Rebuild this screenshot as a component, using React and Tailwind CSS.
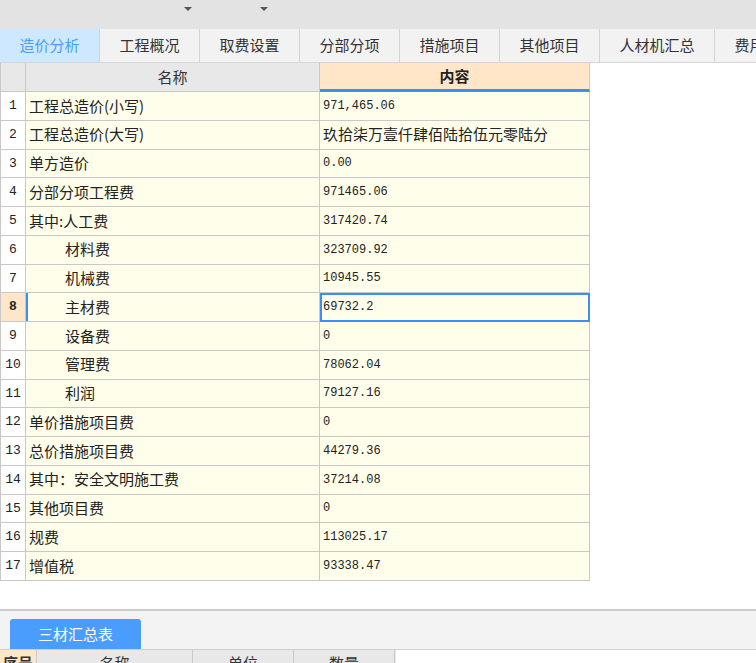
import clsx from 'clsx'

const TABS = ['造价分析', '工程概况', '取费设置', '分部分项', '措施项目', '其他项目', '人材机汇总', '费用汇总']

const ROWS = [
  ['工程总造价(小写)', '971,465.06', false],
  ['工程总造价(大写)', '玖拾柒万壹仟肆佰陆拾伍元零陆分', false],
  ['单方造价', '0.00', false],
  ['分部分项工程费', '971465.06', false],
  ['其中:人工费', '317420.74', false],
  ['材料费', '323709.92', true],
  ['机械费', '10945.55', true],
  ['主材费', '69732.2', true],
  ['设备费', '0', true],
  ['管理费', '78062.04', true],
  ['利润', '79127.16', true],
  ['单价措施项目费', '0', false],
  ['总价措施项目费', '44279.36', false],
  ['其中：安全文明施工费', '37214.08', false],
  ['其他项目费', '0', false],
  ['规费', '113025.17', false],
  ['增值税', '93338.47', false],
]

const cjk = "font-['Noto_Sans_CJK_SC',sans-serif]"
const mono = "font-['Liberation_Mono','Noto_Sans_CJK_SC',monospace]"

function Caret() {
  return <span className="block w-0 h-0 border-l-[4px] border-r-[4px] border-t-[4px] border-l-transparent border-r-transparent border-t-[#555]" />
}

export default function App() {
  const selected = 8
  return (
    <div className={clsx('w-[756px] h-[663px] overflow-hidden bg-white flex flex-col', cjk)}>
      {/* Toolbar */}
      <div className="h-[29px] bg-[#e3e3e3] flex items-start pt-[7px] shrink-0">
        <div className="ml-[184px]"><Caret /></div>
        <div className="ml-[68px]"><Caret /></div>
      </div>

      {/* Tabs */}
      <div className="h-[34px] bg-[#f2f2f2] flex shrink-0 border-b border-[#d6d6d6]">
        {TABS.map((t, i) => (
          <div
            key={t}
            className={clsx(
              'shrink-0 flex items-center justify-center text-[15px] border-r border-[#d3d3d3]',
              i === 6 ? 'w-[115px]' : 'w-[100px]',
              i === 0 ? 'bg-[#cde8ff] text-[#4a9df8]' : 'text-[#333]',
            )}
          >
            {t}
          </div>
        ))}
      </div>

      {/* Main table */}
      <div className="w-[590px] shrink-0 border-l border-[#c8c8c8]">
        <div className="grid grid-cols-[25px_294px_270px] h-[29px]">
          <div className="bg-[#e8e8e8] border-r border-b border-[#c8c8c8]" />
          <div className="bg-[#e8e8e8] border-r border-b border-[#c8c8c8] flex items-center justify-center text-[15px] text-[#333]">名称</div>
          <div className="bg-[#ffe6c9] border-r border-[#c8c8c8] border-b-[3px] border-b-[#3d8ef2] flex items-center justify-center text-[15px] font-bold text-[#222]">内容</div>
        </div>
        {ROWS.map(([name, value, indent], i) => {
          const n = i + 1
          const sel = n === selected
          return (
            <div key={n} className="grid grid-cols-[25px_294px_270px] h-[28.75px]">
              <div className={clsx(
                'border-r border-b border-[#c8c8c8] flex items-center justify-center text-[13px] text-[#222]',
                mono,
                sel ? 'bg-[#ffe6c9] font-bold' : 'bg-white',
              )}>
                {n}
              </div>
              <div className={clsx(
                'bg-[#fffeea] border-r border-b border-[#c8c8c8] flex items-center text-[15px] text-[#222] whitespace-nowrap',
                indent ? 'pl-[39px]' : 'pl-[3px]',
                sel && 'shadow-[inset_2px_0_0_#3d8ef2]',
              )}>
                {name}
              </div>
              <div className={clsx(
                'bg-[#fffeea] border-b border-r border-[#c8c8c8] flex items-center pl-[3px] text-[12px] text-[#222] whitespace-nowrap',
                /[\u4e00-\u9fff]/.test(value) ? 'text-[15px]' : mono,
                sel && 'outline-2 outline-[#3d8ef2] -outline-offset-2',
              )}>
                {value}
              </div>
            </div>
          )
        })}
      </div>

      <div className="flex-1" />

      {/* Bottom panel */}
      <div className="shrink-0 border-t-[2px] border-[#cacaca] bg-[#f3f3f3] h-[40px] flex items-end pl-[10px]">
        <div className="w-[131px] h-[30px] bg-[#4a9dfc] rounded-t-[3px] flex items-center justify-center text-[15px] text-white">
          三材汇总表
        </div>
      </div>
      <div className="shrink-0 h-[14px] flex border-t border-[#d0d0d0] text-[15px] text-[#333] leading-[26px]">
        <div className="w-[37px] bg-[#ffe6c9] border-r border-[#c8c8c8] text-center font-bold">序号</div>
        <div className="w-[156px] bg-[#e8e8e8] border-r border-[#c8c8c8] text-center">名称</div>
        <div className="w-[101px] bg-[#e8e8e8] border-r border-[#c8c8c8] text-center">单位</div>
        <div className="w-[101px] bg-[#e8e8e8] border-r border-[#c8c8c8] text-center">数量</div>
        <div className="w-[1px] bg-[#e8e8e8]" />
      </div>
    </div>
  )
}
